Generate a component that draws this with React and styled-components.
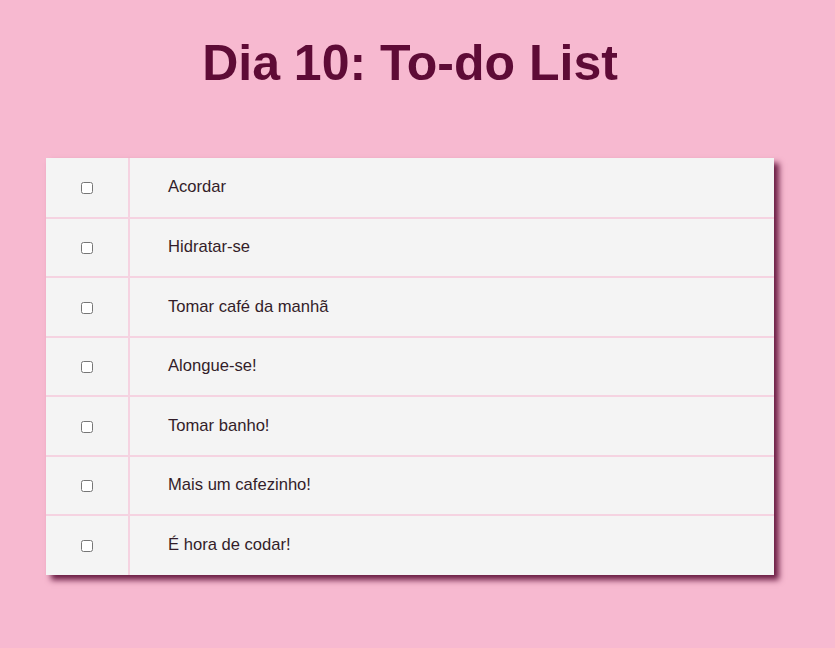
import styled, { createGlobalStyle } from 'styled-components';

const tasks = [
  'Acordar',
  'Hidratar-se',
  'Tomar café da manhã',
  'Alongue-se!',
  'Tomar banho!',
  'Mais um cafezinho!',
  'É hora de codar!',
];

const GlobalStyle = createGlobalStyle`
  html, body {
    margin: 0;
    padding: 0;
    background-color: #f7b9d0;
    font-family: "Liberation Sans", Arial, sans-serif;
  }
`;

function App() {
  return (
    <StyledPage>
      <GlobalStyle />
      <StyledTitle>Dia 10: To-do List</StyledTitle>
      <StyledTable>
        <tbody>
          {tasks.map((task) => (
            <StyledRow key={task}>
              <StyledCheckCell>
                <StyledCheckbox type="checkbox" />
              </StyledCheckCell>
              <StyledTaskCell>{task}</StyledTaskCell>
            </StyledRow>
          ))}
        </tbody>
      </StyledTable>
    </StyledPage>
  );
}

const StyledPage = styled.div`
  display: flex;
  flex-direction: column;
  align-items: center;
  width: 820px;
  padding: 30px 0 74px;
`;

const StyledTitle = styled.h1`
  margin: 0 0 62px;
  font-size: 50px;
  font-weight: 700;
  line-height: 66px;
  color: #5e0b36;
`;

const StyledTable = styled.table`
  width: 728px;
  border-collapse: collapse;
  background-color: #f4f4f4;
  box-shadow: 5px 5px 6px #6a1c43;
`;

const StyledRow = styled.tr`
  height: 59.5px;

  & + & td {
    border-top: 2px solid #f5d3e1;
  }
`;

const StyledCheckCell = styled.td`
  width: 82px;
  padding: 0;
  text-align: center;
  border-right: 2px solid #f5d3e1;
`;

const StyledTaskCell = styled.td`
  padding: 0 0 0 38px;
  font-size: 16.6px;
  color: #331d29;
`;

const StyledCheckbox = styled.input`
  width: 12px;
  height: 12px;
  margin: 0;
  vertical-align: middle;
`;

export default App;
